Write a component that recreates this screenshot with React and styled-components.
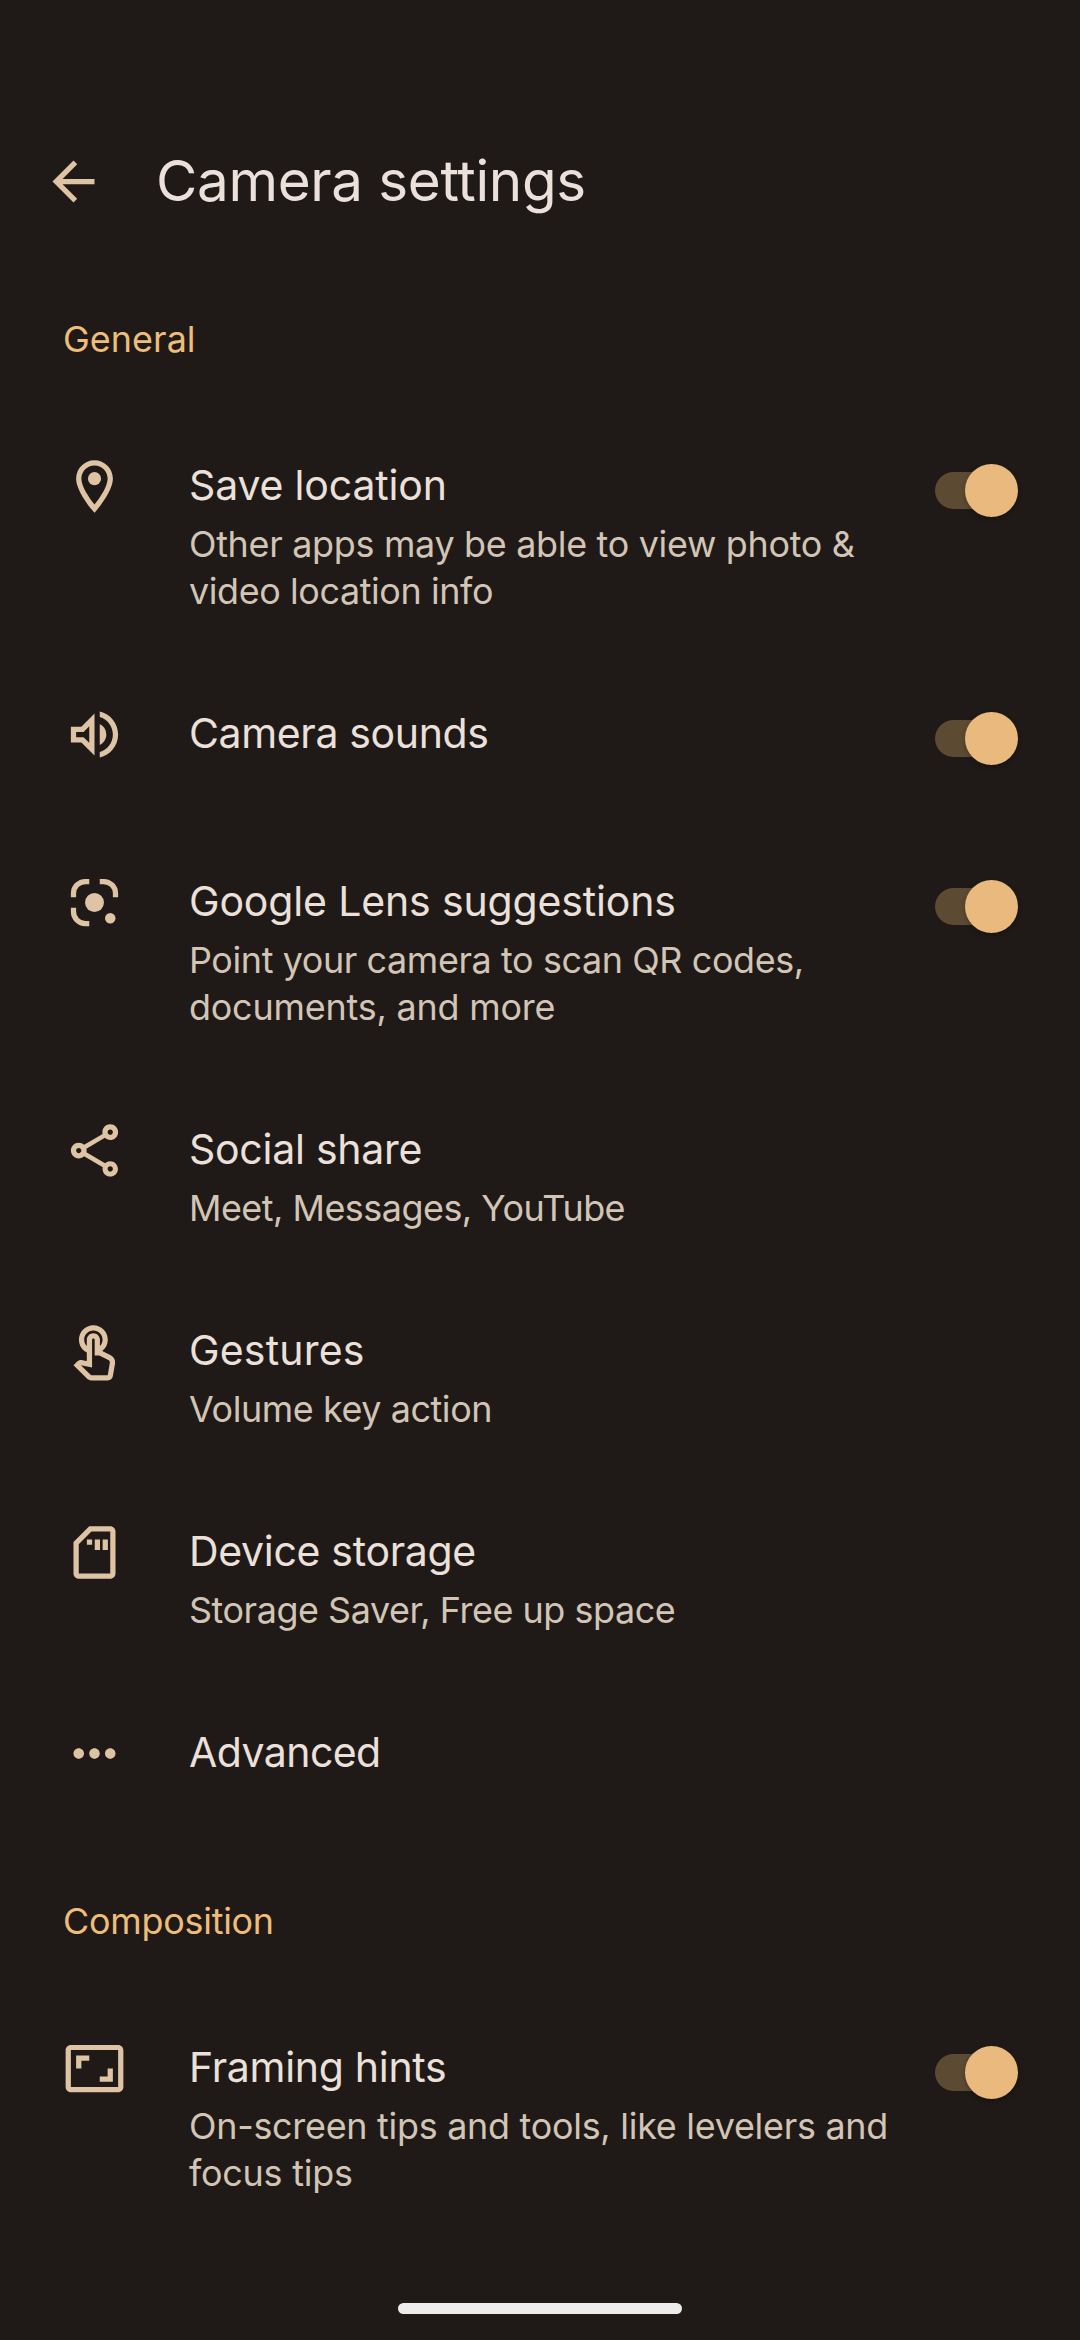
import React, { useState } from "react";
import styled, { createGlobalStyle } from "styled-components";

const color = {
  background: "#1f1a17",
  title: "#ece0da",
  summary: "#d3c5b5",
  icon: "#dfc3a5",
  accent: "#efbd7a",
  thumb: "#eab97d",
  track: "#5d4a32",
  handle: "#ececec",
};

const GlobalStyle = createGlobalStyle`
  * { box-sizing: border-box; }
  body {
    margin: 0;
    background: ${color.background};
    font-family: Inter, Roboto, "Liberation Sans", sans-serif;
    font-weight: 400;
  }
`;

const Screen = styled.div`
  display: flex;
  flex-direction: column;
  width: 1080px;
  height: 2340px;
  overflow: hidden;
  background: ${color.background};
`;

const AppBar = styled.header`
  display: flex;
  align-items: flex-start;
  flex: none;
  height: 266px;
  padding: 146px 42px 0;
`;

const BackButton = styled.button`
  display: flex;
  flex: none;
  width: 63px;
  height: 63px;
  margin: 4px 51px 0 0;
  padding: 0;
  border: 0;
  background: none;
`;

const PageTitle = styled.h1`
  margin: 0;
  color: ${color.title};
  font-size: 56.6px;
  font-weight: 400;
  line-height: 70px;
  letter-spacing: -0.34px;
  white-space: nowrap;
`;

const Content = styled.main`
  display: flex;
  flex: 1;
  flex-direction: column;
`;

const SectionTitle = styled.h2`
  flex: none;
  margin: 0;
  padding: 49px 63px 50px;
  color: ${color.accent};
  font-size: 35.9px;
  font-weight: 400;
  line-height: 48px;
  letter-spacing: ${(p) => p.$tracking - 0.24}px;
`;

const Row = styled.div`
  display: flex;
  flex: none;
  align-items: flex-start;
  min-height: 168px;
  padding: 0 62px 0 63px;
`;

const IconSlot = styled.div`
  display: flex;
  flex: none;
  width: 126px;
  padding-top: 42px;
`;

const Glyph = styled.svg`
  display: block;
  width: 63px;
  height: 63px;
  fill: ${color.icon};
`;

const Labels = styled.div`
  flex: 1;
  padding: 47px 0 46px;
`;

const Label = styled.div`
  color: ${color.title};
  font-size: 41px;
  line-height: 50px;
  letter-spacing: ${(p) => p.$tracking - 0.26}px;
  white-space: nowrap;
`;

const Summary = styled.div`
  padding-top: 11px;
`;

const SummaryLine = styled.div`
  color: ${color.summary};
  font-size: 35.9px;
  line-height: 47px;
  letter-spacing: ${(p) => p.$tracking - 0.22}px;
  white-space: nowrap;
`;

const Switch = styled.button`
  display: flex;
  flex: none;
  align-items: center;
  justify-content: ${(p) => (p.$on ? "flex-end" : "flex-start")};
  width: 75px;
  height: 37px;
  margin: 59px 8px 0 0;
  padding: 0;
  border: 0;
  border-radius: 19px;
  background: ${color.track};
`;

const Thumb = styled.span`
  flex: none;
  width: 53px;
  height: 53px;
  margin: 0 -8px;
  border-radius: 50%;
  background: ${color.thumb};
  box-shadow: 0 2px 5px rgba(0, 0, 0, 0.28);
`;

const NavigationArea = styled.footer`
  display: flex;
  flex: none;
  justify-content: center;
  height: 37px;
`;

const NavigationHandle = styled.div`
  width: 284px;
  height: 11px;
  border-radius: 6px;
  background: ${color.handle};
`;

const Icon = ({ children }) => (
  <Glyph viewBox="0 0 24 24" aria-hidden="true">
    {children}
  </Glyph>
);

const icons = {
  back: <path d="M20 11H7.83l5.59-5.59L12 4l-8 8 8 8 1.41-1.41L7.83 13H20v-2z" />,
  place: (
    <>
      <path d="M12 2C8.13 2 5 5.13 5 9c0 5.25 7 13 7 13s7-7.75 7-13c0-3.87-3.13-7-7-7zM7 9c0-2.76 2.24-5 5-5s5 2.24 5 5c0 2.88-2.88 7.19-5 9.88C9.92 16.21 7 11.85 7 9z" />
      <circle cx="12" cy="9" r="2.5" />
    </>
  ),
  volume: (
    <path d="M3 9v6h4l5 5V4L7 9H3zm7-.17v6.34L7.83 13H5v-2h2.83L10 8.83zM16.5 12A4.5 4.5 0 0 0 14 7.97v8.05c1.48-.73 2.5-2.25 2.5-4.02zM14 3.23v2.06c2.89.86 5 3.54 5 6.71s-2.11 5.85-5 6.71v2.06c4.01-.91 7-4.49 7-8.77s-2.99-7.86-7-8.77z" />
  ),
  lens: (
    <>
      <path
        d="M4 10V8.5A4.5 4.5 0 0 1 8.5 4H10M14 4h1.5A4.5 4.5 0 0 1 20 8.5V10M4 14v1.5A4.5 4.5 0 0 0 8.5 20H10"
        fill="none"
        stroke={color.icon}
        strokeWidth="2"
      />
      <circle cx="12" cy="12" r="3.6" />
      <circle cx="18" cy="18" r="2" />
    </>
  ),
  share: (
    <path d="M18 16.08c-.76 0-1.44.3-1.96.77L8.91 12.7c.05-.23.09-.46.09-.7s-.04-.47-.09-.7l7.05-4.11c.54.5 1.25.81 2.04.81 1.66 0 3-1.34 3-3s-1.34-3-3-3-3 1.34-3 3c0 .24.04.47.09.7L8.04 9.81C7.5 9.31 6.79 9 6 9c-1.66 0-3 1.34-3 3s1.34 3 3 3c.79 0 1.5-.31 2.04-.81l7.12 4.16c-.05.21-.08.43-.08.65 0 1.61 1.31 2.92 2.92 2.92s2.92-1.31 2.92-2.92-1.31-2.92-2.92-2.92zM18 4c.55 0 1 .45 1 1s-.45 1-1 1-1-.45-1-1 .45-1 1-1zM6 13c-.55 0-1-.45-1-1s.45-1 1-1 1 .45 1 1-.45 1-1 1zm12 7.02c-.55 0-1-.45-1-1s.45-1 1-1 1 .45 1 1-.45 1-1 1z" />
  ),
  touch: (
    <path
      transform="translate(0 1)"
      d="M18.19 12.44l-3.24-1.62c1.29-1 2.12-2.56 2.12-4.32 0-3.03-2.47-5.5-5.5-5.5s-5.5 2.47-5.5 5.5c0 2.13 1.22 3.98 3 4.89v3.26c-2.15-.46-2.02-.44-2.26-.44-.53 0-1.03.21-1.41.59L4 16.22l5.09 5.09c.43.44 1.03.69 1.65.69h6.3c.98 0 1.81-.7 1.97-1.67l.8-4.71c.22-1.3-.43-2.58-1.62-3.18zm-.35 2.85l-.8 4.71h-6.3c-.09 0-.17-.04-.24-.1l-3.68-3.68 4.25.89V6.5c0-.28.22-.5.5-.5s.5.22.5.5v6h1.76l3.46 1.73c.4.2.62.63.55 1.06zM8.07 6.5c0-1.93 1.57-3.5 3.5-3.5s3.5 1.57 3.5 3.5c0 .95-.38 1.81-1 2.44V6.5c0-1.38-1.12-2.5-2.5-2.5s-2.5 1.12-2.5 2.5v2.44c-.62-.63-1-1.49-1-2.44z"
    />
  ),
  storage: (
    <>
      <path d="M18 2h-8L4 8v12c0 1.1.9 2 2 2h12c1.1 0 2-.9 2-2V4c0-1.1-.9-2-2-2zm0 18H6V8.83L10.83 4H18v16z" />
      <path d="M9.1 7h2v2h-2zM12.1 7h2v4h-2zM15.1 7h2v4h-2z" />
    </>
  ),
  more: (
    <path d="M6 10c-1.1 0-2 .9-2 2s.9 2 2 2 2-.9 2-2-.9-2-2-2zm12 0c-1.1 0-2 .9-2 2s.9 2 2 2 2-.9 2-2-.9-2-2-2zm-6 0c-1.1 0-2 .9-2 2s.9 2 2 2 2-.9 2-2-.9-2-2-2z" />
  ),
  framing: (
    <path d="M19 12h-2v3h-3v2h5v-5zM7 9h3V7H5v5h2V9zm14-6H3c-1.1 0-2 .9-2 2v14c0 1.1.9 2 2 2h18c1.1 0 2-.9 2-2V5c0-1.1-.9-2-2-2zm0 16.01H3V4.99h18v14.02z" />
  ),
};

const sections = [
  {
    title: "General",
    tracking: 0.3,
    rows: [
      {
        icon: "place",
        label: ["Save location", 0.09],
        summary: [
          ["Other apps may be able to view photo &", -0.07],
          ["video location info", -0.17],
        ],
        toggle: true,
      },
      { icon: "volume", label: ["Camera sounds", -0.1], toggle: true },
      {
        icon: "lens",
        label: ["Google Lens suggestions", 0.11],
        summary: [
          ["Point your camera to scan QR codes,", -0.16],
          ["documents, and more", 0.03],
        ],
        toggle: true,
      },
      {
        icon: "share",
        label: ["Social share", 0],
        summary: [["Meet, Messages, YouTube", -0.27]],
      },
      {
        icon: "touch",
        label: ["Gestures", 0.45],
        summary: [["Volume key action", -0.19]],
      },
      {
        icon: "storage",
        label: ["Device storage", -0.05],
        summary: [["Storage Saver, Free up space", -0.22]],
      },
      { icon: "more", label: ["Advanced", -0.3] },
    ],
  },
  {
    title: "Composition",
    tracking: 0,
    rows: [
      {
        icon: "framing",
        label: ["Framing hints", -0.04],
        summary: [
          ["On-screen tips and tools, like levelers and", -0.04],
          ["focus tips", 0],
        ],
        toggle: true,
      },
    ],
  },
];

function SettingSwitch({ label }) {
  const [on, setOn] = useState(true);
  return (
    <Switch $on={on} role="switch" aria-checked={on} aria-label={label} onClick={() => setOn(!on)}>
      <Thumb />
    </Switch>
  );
}

function SettingRow({ icon, label, summary, toggle }) {
  return (
    <Row>
      <IconSlot>
        <Icon>{icons[icon]}</Icon>
      </IconSlot>
      <Labels>
        <Label $tracking={label[1]}>{label[0]}</Label>
        {summary && (
          <Summary>
            {summary.map(([text, tracking]) => (
              <SummaryLine key={text} $tracking={tracking}>
                {text}
              </SummaryLine>
            ))}
          </Summary>
        )}
      </Labels>
      {toggle && <SettingSwitch label={label[0]} />}
    </Row>
  );
}

export default function App() {
  return (
    <Screen>
      <GlobalStyle />
      <AppBar>
        <BackButton aria-label="Back">
          <Icon>{icons.back}</Icon>
        </BackButton>
        <PageTitle>Camera settings</PageTitle>
      </AppBar>
      <Content>
        {sections.map((section) => (
          <React.Fragment key={section.title}>
            <SectionTitle $tracking={section.tracking}>{section.title}</SectionTitle>
            {section.rows.map((row) => (
              <SettingRow key={row.label[0]} {...row} />
            ))}
          </React.Fragment>
        ))}
      </Content>
      <NavigationArea>
        <NavigationHandle />
      </NavigationArea>
    </Screen>
  );
}
